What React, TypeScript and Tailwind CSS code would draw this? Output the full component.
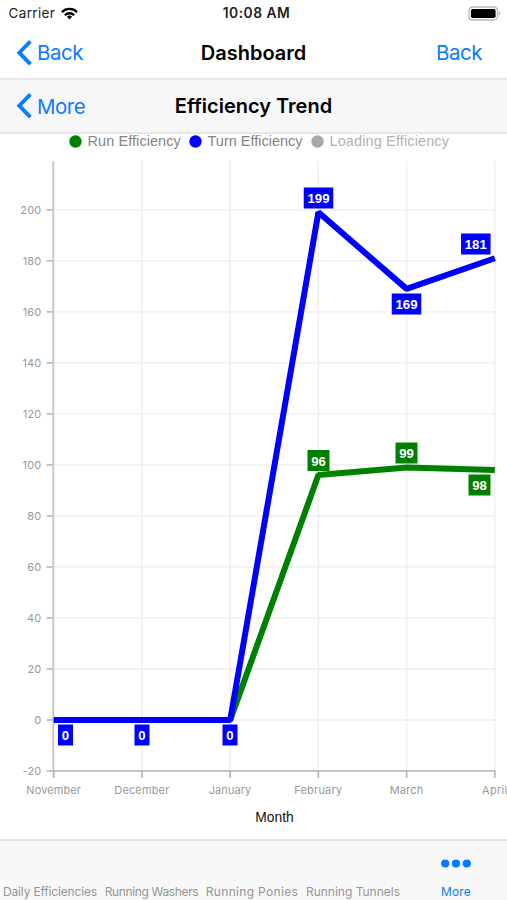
type Label = { text: string; x: number; y: number; w: number };

type Series = {
  name: string;
  color: string;
  values: number[];
  labels: Label[];
};

const months = ["November", "December", "January", "February", "March", "April"];
const monthWidths = [54.5, 55, 42.5, 48, 33.5, 25];
const ticks = [-20, 0, 20, 40, 60, 80, 100, 120, 140, 160, 180, 200];

const series: Series[] = [
  {
    name: "Run Efficiency",
    color: "#008000",
    values: [0, 0, 0, 96, 99, 98],
    labels: [
      { text: "96", x: 318.5, y: 312.5, w: 22 },
      { text: "99", x: 406.5, y: 305, w: 22 },
      { text: "98", x: 479.5, y: 337, w: 22 },
    ],
  },
  {
    name: "Turn Efficiency",
    color: "#0000ff",
    values: [0, 0, 0, 199, 169, 181],
    labels: [
      { text: "0", x: 65.5, y: 587, w: 15 },
      { text: "0", x: 142, y: 587, w: 15 },
      { text: "0", x: 230, y: 587, w: 15 },
      { text: "199", x: 318.5, y: 50, w: 29.5 },
      { text: "169", x: 406.5, y: 156, w: 29.5 },
      { text: "181", x: 475.8, y: 96, w: 29.5 },
    ],
  },
];

const legend = [
  { name: "Run Efficiency", color: "#008000", text: "text-[#858585] tracking-[0.07px]", width: "w-[94px]" },
  { name: "Turn Efficiency", color: "#0000ff", text: "text-[#858585]", width: "w-[96px]" },
  { name: "Loading Efficiency", color: "#a9a9a9", text: "text-[#b3b3b3] tracking-[0.12px]", width: "w-[122px]" },
];

const tabs = [
  { name: "Daily Efficiencies", className: "w-[100px] tracking-[-0.16px]" },
  { name: "Running Washers", className: "w-[103px] tracking-[-0.35px]" },
  { name: "Running Ponies", className: "w-[98px] tracking-[0.33px]" },
  { name: "Running Tunnels", className: "w-[104px]" },
];

const xAt = (i: number) => 53.8 + i * 88.2;
const yAt = (v: number) => 572 - v * 2.551;

function StatusBar() {
  return (
    <div className="relative flex h-[27px] items-center justify-between pl-[8.5px] pr-[6px] text-[13.5px] leading-none text-[#222]">
      <div className="flex items-center gap-[6px]">
        <span className="tracking-[0.36px]">Carrier</span>
        <svg width="17" height="13" viewBox="0 0 17 13" fill="none" stroke="#000" strokeWidth="2.3">
          <path d="M0.9 5.1a10.8 10.8 0 0 1 15.2 0" />
          <path d="M3.8 8.2a6.7 6.7 0 0 1 9.4 0" />
          <path d="M8.5 12.4 5.9 9.8a3.7 3.7 0 0 1 5.2 0z" fill="#000" stroke="none" />
        </svg>
      </div>
      <span className="absolute inset-x-0 pl-1.5 text-center text-[13.8px] font-semibold tracking-[0.5px]">10:08 AM</span>
      <svg width="33" height="15" viewBox="0 0 33 15">
        <rect x="1" y="1" width="28.5" height="13" rx="3.6" fill="#fff" stroke="#b8b8b8" strokeWidth="1.3" />
        <rect x="2.9" y="2.9" width="24.7" height="9.2" rx="1.8" fill="#000" />
        <path d="M30.8 5.3c1.9.8 1.9 3.6 0 4.4z" fill="#aaa" />
      </svg>
    </div>
  );
}

function NavBar({ back, title, action, className }: { back: string; title: string; action?: string; className: string }) {
  return (
    <header className={`relative flex items-center justify-between border-b-2 border-[#e8e8e8] pl-4 pr-[25px] ${className}`}>
      <button className="flex items-center gap-[5px] text-[20.5px] leading-none text-[#087dff]">
        <svg width="16" height="26" viewBox="0 0 16 26" fill="none" stroke="currentColor" strokeWidth="3.8">
          <path d="M14.4 1.4 3.2 12.7 14.4 24.2" />
        </svg>
        <span className="pt-[2px] tracking-[-0.5px]">{back}</span>
      </button>
      <h1 className="pointer-events-none absolute inset-x-0 text-center text-[20px] font-semibold leading-none text-black">
        {title}
      </h1>
      {action && <button className="pt-[2px] text-[20.5px] leading-none tracking-[-0.5px] text-[#087dff]">{action}</button>}
    </header>
  );
}

function Legend() {
  return (
    <div className="flex h-[14px] items-center gap-[7.5px] pl-[69px] font-['Liberation_Sans',sans-serif]">
      {legend.map((item) => (
        <div key={item.name} className="flex shrink-0 items-center gap-[5.5px]">
          <svg width="13" height="13" viewBox="0 0 13 13" className="shrink-0">
            <circle cx="6.5" cy="6.5" r="6.2" fill={item.color} />
          </svg>
          <span className={`whitespace-nowrap text-[14.5px] leading-none ${item.width} ${item.text}`}>{item.name}</span>
        </div>
      ))}
    </div>
  );
}

function TrendChart() {
  return (
    <svg width="507" height="691" viewBox="0 0 507 691" className="block">
      {/* Grid */}
      {ticks.slice(1).map((t) => (
        <line key={t} x1="54" x2="495" y1={yAt(t)} y2={yAt(t)} stroke="#eeeeee" strokeWidth="1.3" />
      ))}
      {months.slice(1).map((m, i) => (
        <line key={m} x1={xAt(i + 1)} x2={xAt(i + 1)} y1="13" y2="623" stroke="#eeeeee" strokeWidth="1.3" />
      ))}

      {/* Axes */}
      <path d="M53.3 13V623" stroke="#c8c8c8" strokeWidth="2" />
      <path d="M52.5 623H495.5" stroke="#b4b4b4" strokeWidth="1.6" />
      {ticks.map((t) => (
        <g key={t}>
          <line x1="46.5" x2="53" y1={yAt(t)} y2={yAt(t)} stroke="#b8b8b8" strokeWidth="1.6" />
          <text x="41.5" y={yAt(t) + 4} textAnchor="end" fontSize="11" letterSpacing="0.2" fill="#999">
            {t}
          </text>
        </g>
      ))}
      {months.map((m, i) => (
        <g key={m}>
          <line x1={xAt(i)} x2={xAt(i)} y1="623" y2="630" stroke="#b0b0b0" strokeWidth="1.5" />
          <text x={xAt(i) - 0.2} y="646" textAnchor="middle" fontSize="11" textLength={monthWidths[i]} fill="#999">
            {m}
          </text>
        </g>
      ))}

      {series.map((s) => (
        <polyline
          key={s.name}
          points={s.values.map((v, i) => `${xAt(i)},${yAt(v)}`).join(" ")}
          fill="none"
          stroke={s.color}
          strokeWidth="6"
          strokeLinejoin="bevel"
        />
      ))}
      {series.flatMap((s) =>
        s.labels.map((l) => (
          <g key={`${s.name}-${l.x}`}>
            <rect x={l.x - l.w / 2} y={l.y - 10.5} width={l.w} height="21" fill={s.color} />
            <text
              x={l.x}
              y={l.y + 5.2}
              textAnchor="middle"
              fontSize="13.2"
              fontWeight="bold"
              fill="#fff"
              className="font-['Liberation_Sans',sans-serif]"
            >
              {l.text}
            </text>
          </g>
        ))
      )}

      <text
        x="274.5"
        y="673.5"
        textAnchor="middle"
        fontSize="13.8"
        textLength="38.5"
        lengthAdjust="spacingAndGlyphs"
        fill="#111"
        className="font-['Liberation_Sans',sans-serif]"
      >
        Month
      </text>
    </svg>
  );
}

function TabBar() {
  return (
    <nav className="flex h-[61px] border-t-2 border-[#e4e4e4] bg-[#f8f8f8] text-[12px] leading-none text-[#959595]">
      {tabs.map((tab) => (
        <button key={tab.name} className={`flex items-end justify-center whitespace-nowrap pb-[2px] ${tab.className}`}>
          {tab.name}
        </button>
      ))}
      <button className="flex w-[102px] flex-col items-center justify-between pb-[2px] pt-[18px] text-[#087dff]">
        <svg width="30" height="9" viewBox="0 0 30 9" fill="#007aff">
          <circle cx="4.2" cy="4.5" r="4.1" />
          <circle cx="15" cy="4.5" r="4.1" />
          <circle cx="25.8" cy="4.5" r="4.1" />
        </svg>
        <span className="tracking-[0.15px]">More</span>
      </button>
    </nav>
  );
}

export default function App() {
  return (
    <div className="flex h-[900px] w-[507px] flex-col overflow-hidden bg-white font-['Inter',sans-serif]">
      <StatusBar />
      <NavBar back="Back" title="Dashboard" action="Back" className="h-[53px] bg-white" />
      <NavBar back="More" title="Efficiency Trend" className="h-[54px] bg-[#f7f7f7]" />
      <Legend />
      <TrendChart />
      <TabBar />
    </div>
  );
}
